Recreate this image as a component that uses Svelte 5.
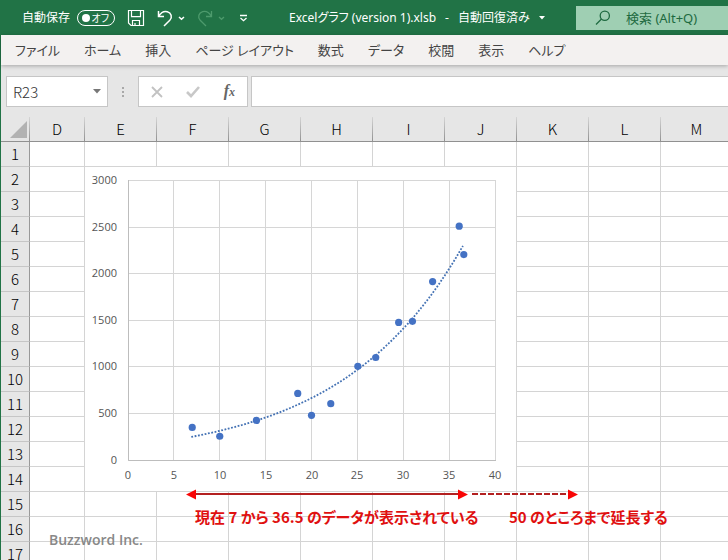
<script>
  const menus = ['ファイル', 'ホーム', '挿入', 'ページ レイアウト', '数式', 'データ', '校閲', '表示', 'ヘルプ'];
  const columns = ['D', 'E', 'F', 'G', 'H', 'I', 'J', 'K', 'L', 'M'];
  const rows = Array.from({ length: 17 }, (_, i) => i + 1);

  const points = [
    [7, 350], [10, 255], [14, 425], [18.5, 715], [20, 480], [22.1, 605], [25.05, 1005],
    [27, 1100], [29.5, 1477], [31, 1488], [33.2, 1915], [36.1, 2510], [36.6, 2205]
  ];
  const xTicks = [0, 5, 10, 15, 20, 25, 30, 35, 40];
  const yTicks = [0, 500, 1000, 1500, 2000, 2500, 3000];

  const px = (v) => 43 + (v / 40) * 367;
  const py = (v) => 293 - (v / 3000) * 279.5;
  const line = (v) => Math.floor(v) + 0.5;

  const trend = Array.from({ length: 60 }, (_, i) => {
    const x = 6.9 + (i / 59) * 29.6;
    return `${px(x).toFixed(1)},${py(250 * Math.exp(0.0752 * (x - 7))).toFixed(1)}`;
  }).join(' ');

  let cellName = $state('R23');
  let formula = $state('');
  let query = $state('');
  let autosave = $state(false);
</script>

<div class="app">
  <header class="titlebar">
    <div class="quick">
      <span id="autosave-label">自動保存</span>
      <button class="toggle" role="switch" aria-checked={autosave} aria-labelledby="autosave-label" onclick={() => (autosave = !autosave)}>
        <span class="knob"></span><span>オフ</span>
      </button>
      <button class="icon save" aria-label="上書き保存">
        <svg width="18" height="18" viewBox="0 0 18 18" fill="none" stroke="#fff" stroke-width="1.2"><path d="M1.5 1.5h15v15H4L1.5 14zM4.5 1.5v6.200h9V1.500M5.500 16.500v-5h7v5M8 16.500v-2.500" /></svg>
      </button>
      <button class="icon undo" aria-label="元に戻す">
        <svg width="28" height="18" viewBox="0 0 28 18" fill="none" stroke="#fff" stroke-width="1.500"><path d="M1.500 2v5.500H7M1.700 7.200C4 3.500 7 1.800 10.300 2.700c4 1.100 5.400 5.500 2.500 8.600L7 17" /><path d="M22 8l2.500 2.300L27 8" /></svg>
      </button>
      <button class="icon redo" aria-label="やり直し">
        <svg width="28" height="18" viewBox="0 0 28 18" fill="none" stroke="#4d9a6c" stroke-width="1.300"><path d="M14.500 2v5.500H9M14.300 7.200C12 3.500 9 1.800 5.700 2.700 1.700 3.800.3 8.200 3.200 11.300L9 17" /><path d="M22 8l2.500 2.300L27 8" /></svg>
      </button>
      <button class="icon more" aria-label="クイック アクセス ツール バーのユーザー設定">
        <svg width="9" height="8" viewBox="0 0 9 8" fill="none" stroke="#fff" stroke-width="1.300"><path d="M1 1.500h7M1.500 4l3 2.700 3-2.700" /></svg>
      </button>
    </div>
    <button class="document">
      <span>Excelグラフ (version 1).xlsb</span>
      <span>-</span>
      <span>自動回復済み</span>
      <svg width="6" height="4" viewBox="0 0 6 4"><path d="M0 0h6L3 3.500z" fill="#fff" /></svg>
    </button>
    <label class="search">
      <svg width="16" height="16" viewBox="0 0 16 16" fill="none" stroke="#1e6a40" stroke-width="1.300"><circle cx="9.800" cy="5.700" r="4.600" /><path d="M6.500 9L1 14.500" /></svg>
      <input type="text" aria-label="検索" placeholder="検索 (Alt+Q)" bind:value={query} />
    </label>
  </header>

  <main class="window">
    <nav class="menu">
      {#each menus as menu}
        <button>{menu}</button>
      {/each}
    </nav>

    <div class="formula-bar">
      <div class="name-box">
        <input aria-label="名前ボックス" bind:value={cellName} />
        <button class="icon" aria-label="名前の一覧">
          <svg width="8" height="5" viewBox="0 0 8 5"><path d="M0 0h8L4 4.500z" fill="#777" /></svg>
        </button>
      </div>
      <svg class="grip" width="2" height="10" viewBox="0 0 2 10" fill="#a8a8a8"><path d="M0 0h2v2H0zM0 4h2v2H0zM0 8h2v2H0z" /></svg>
      <div class="actions">
        <button class="icon" aria-label="キャンセル">
          <svg width="12" height="12" viewBox="0 0 12 12" fill="none" stroke="#c2c2c2" stroke-width="1.800"><path d="M1 1l10 10M11 1L1 11" /></svg>
        </button>
        <button class="icon" aria-label="入力">
          <svg width="14" height="12" viewBox="0 0 14 12" fill="none" stroke="#c8c8c8" stroke-width="2.600"><path d="M1 6l4 4 8-9" /></svg>
        </button>
        <button class="icon fx" aria-label="関数の挿入"><i>f<small>x</small></i></button>
      </div>
      <input class="formula" aria-label="数式バー" bind:value={formula} />
    </div>

    <div class="sheet">
      <table>
        <colgroup>
          <col class="c-head" /><col class="c-d" />
          {#each columns.slice(1, -1) as _}<col class="c-std" />{/each}
          <col />
        </colgroup>
        <thead>
          <tr>
            <th class="corner"><svg width="17" height="17" viewBox="0 0 17 17"><path d="M17 0v17H0z" fill="#b2b2b2" /></svg></th>
            {#each columns as c}<th scope="col">{c}</th>{/each}
          </tr>
        </thead>
        <tbody>
          {#each rows as r}
            <tr>
              <th scope="row">{r}</th>
              {#each columns as _}<td></td>{/each}
            </tr>
          {/each}
        </tbody>
      </table>

      <svg class="chart" width="431" height="324" viewBox="0 0 431 324" role="img" aria-label="散布図">
        <rect width="431" height="324" fill="#fff" />
        <g stroke="#d6d6d6">
          {#each xTicks as t}<path d="M{line(px(t))} 13V293" />{/each}
          {#each yTicks as t}<path d="M43 {line(py(t))}H411" />{/each}
        </g>
        <path d="M43.500 13V293.500H411" fill="none" stroke="#bdbdbd" />
        <polyline points={trend} fill="none" stroke="#4472b4" stroke-width="1.800" stroke-dasharray="1.800 1.600" />
        <g fill="#4472c4">
          {#each points as [x, y]}<circle cx={px(x)} cy={py(y)} r="3.600" />{/each}
        </g>
        {#each yTicks as t}<text x="32" y={Math.floor(py(t)) + 4} text-anchor="end">{t}</text>{/each}
        {#each xTicks as t}<text x={Math.round(px(t))} y="312" text-anchor="middle">{t}</text>{/each}
      </svg>

      <svg class="arrows" width="392" height="11" viewBox="0 0 392 11">
        <path d="M9 5H274" stroke="#b32020" stroke-width="2" />
        <path d="M286 5H383" stroke="#b32020" stroke-width="2" stroke-dasharray="6 2" />
        <path d="M0 5.500L10 .5v10zM282 5.500L272 .5v10zM392 5.500L382 .5v10z" fill="#f80505" />
      </svg>
      <p class="note current">現在 7 から 36.5 のデータが表示されている</p>
      <p class="note extend">50 のところまで延長する</p>
      <p class="credit">Buzzword Inc.</p>
    </div>
  </main>
</div>

<style>
  :global(body) {
    margin: 0;
  }
  .app {
    height: 100vh;
    display: flex;
    flex-direction: column;
    overflow: hidden;
    font: 12px/16px "Noto Sans", "Noto Sans CJK JP", sans-serif;
    font-feature-settings: "palt";
  }
  button,
  input {
    box-sizing: border-box;
    margin: 0;
    padding: 0;
    border: 0;
    background: none;
    color: inherit;
    font: inherit;
    font-feature-settings: inherit;
  }
  .icon {
    display: flex;
    align-items: center;
    justify-content: center;
  }
  .titlebar {
    flex: none;
    height: 35px;
    display: flex;
    align-items: center;
    background: #217346;
    color: #fff;
  }
  .quick {
    flex: none;
    width: 289px;
    box-sizing: border-box;
    padding-left: 22px;
    display: flex;
    align-items: center;
  }
  .toggle {
    width: 38px;
    height: 16px;
    margin-left: 7px;
    padding: 0 5px 0 4px;
    display: flex;
    align-items: center;
    justify-content: space-between;
    border: 1px solid #fff;
    border-radius: 8px;
    font-size: 10px;
    line-height: 14px;
  }
  .knob {
    width: 8px;
    height: 8px;
    border-radius: 50%;
    background: #fff;
  }
  .save,
  .undo,
  .redo {
    margin-left: 12px;
  }
  .more {
    margin-left: 14px;
  }
  .document {
    flex: 1;
    display: flex;
    align-items: center;
    gap: 9px;
    white-space: nowrap;
  }
  .search {
    flex: none;
    width: 152px;
    height: 24px;
    box-sizing: border-box;
    padding-left: 19px;
    display: flex;
    align-items: center;
    gap: 15px;
    background: #9fcfb3;
    color: #1e6a40;
    font-size: 13px;
  }
  .search input {
    width: 96px;
  }
  .search input::placeholder {
    color: #1e6a40;
    opacity: 1;
  }
  .window {
    flex: 1;
    min-height: 0;
    display: flex;
    flex-direction: column;
    border-left: 1px solid #217346;
    background: #e6e6e6;
  }
  .menu {
    flex: none;
    height: 30px;
    padding-left: 14px;
    display: flex;
    align-items: center;
    gap: 24px;
    background: #f3f1f0;
    box-shadow: 0 1px 4px #00000048;
    color: #444;
    font-size: 13px;
    white-space: nowrap;
  }
  .formula-bar {
    flex: none;
    margin-top: 11px;
    padding-left: 5px;
    display: flex;
    align-items: center;
  }
  .name-box,
  .actions,
  .formula {
    box-sizing: border-box;
    height: 31px;
    border: 1px solid #c6c6c6;
    background: #fff;
  }
  .name-box {
    width: 102px;
    padding: 0 6px;
    display: flex;
    align-items: center;
    color: #333;
    font-size: 15px;
  }
  .name-box input {
    flex: 1;
    min-width: 0;
    height: 28px;
    font-family: "Noto Sans CJK JP", sans-serif;
    font-weight: 300;
  }
  .grip {
    margin: 0 14px;
  }
  .actions {
    width: 110px;
    padding: 0 12px;
    display: flex;
    align-items: center;
    justify-content: space-between;
  }
  .fx {
    color: #666;
    font: bold 16px/16px "Liberation Serif", serif;
  }
  .fx small {
    font-size: 12px;
  }
  .formula {
    flex: 1;
    min-width: 0;
    margin-left: 3px;
    border-right: 0;
  }
  .sheet {
    position: relative;
    flex: 1;
    min-height: 0;
    padding-top: 10px;
    overflow: hidden;
  }
  table {
    width: 100%;
    min-width: 732px;
    table-layout: fixed;
    border-collapse: separate;
    border-spacing: 0;
    font: 15px/22px "Noto Sans CJK JP", sans-serif;
    color: #000;
  }
  .c-head {
    width: 29px;
  }
  .c-d {
    width: 55px;
  }
  .c-std {
    width: 72px;
  }
  th,
  td {
    box-sizing: border-box;
    height: 25px;
    padding: 0;
    border-right: 1px solid #d4d4d4;
    border-bottom: 1px solid #d4d4d4;
    font-weight: 300;
  }
  td {
    background: #fff;
  }
  thead th {
    border-right: 1px solid;
    border-bottom: 1px solid #999;
    border-image: linear-gradient(#d8d8d8, #8f8f8f) 1;
    border-top: 0;
    border-left: 0;
  }
  tbody th {
    border-right-color: #999;
    border-bottom-color: #c6c6c6;
  }
  .corner {
    text-align: right;
    padding-right: 2px;
    line-height: 0;
  }
  .chart,
  .arrows,
  .note,
  .credit {
    position: absolute;
    margin: 0;
  }
  .chart {
    left: 84px;
    top: 60px;
  }
  .chart text {
    fill: #555;
    font: 11px "Open Sans", sans-serif;
  }
  .arrows {
    left: 185px;
    top: 382px;
  }
  .note {
    top: 399px;
    color: #e01010;
    font: 700 15px/22px "Noto Sans CJK JP", sans-serif;
    font-feature-settings: "palt";
    white-space: nowrap;
  }
  .current {
    left: 194px;
  }
  .extend {
    left: 508px;
  }
  .credit {
    left: 48px;
    top: 423px;
    color: #888;
    font: 600 14px/20px "Open Sans", sans-serif;
  }
</style>
